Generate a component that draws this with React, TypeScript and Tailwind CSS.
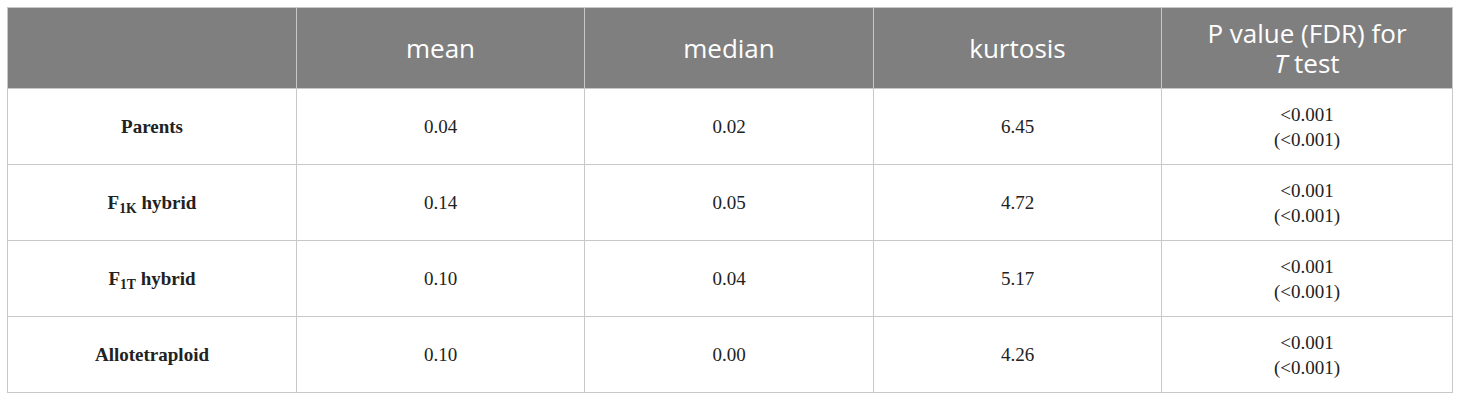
const rows = [
  { label: <>Parents</>, mean: "0.04", median: "0.02", kurtosis: "6.45" },
  {
    label: (
      <>
        F<sub className="text-[0.72em] align-[-0.05em]">1K</sub> hybrid
      </>
    ),
    mean: "0.14",
    median: "0.05",
    kurtosis: "4.72",
  },
  {
    label: (
      <>
        F<sub className="text-[0.72em] align-[-0.05em]">1T</sub> hybrid
      </>
    ),
    mean: "0.10",
    median: "0.04",
    kurtosis: "5.17",
  },
  { label: <>Allotetraploid</>, mean: "0.10", median: "0.00", kurtosis: "4.26" },
];

export default function App() {
  return (
    <div className="w-[1460px] h-[401px] bg-white p-[7px]">
      <table className="w-[1446px] table-fixed border-collapse border border-[#c8c8c8]">
        <colgroup>
          <col className="w-[289px]" />
          <col className="w-[288px]" />
          <col className="w-[289px]" />
          <col className="w-[288px]" />
          <col />
        </colgroup>
        <thead>
          <tr className="h-[81px] bg-[#7f7f7f] text-white font-['Open_Sans',sans-serif] text-[26px] leading-[30px]">
            <th className="border border-[#c8c8c8] font-normal" />
            <th className="border border-[#c8c8c8] font-normal">mean</th>
            <th className="border border-[#c8c8c8] font-normal">median</th>
            <th className="border border-[#c8c8c8] font-normal">kurtosis</th>
            <th className="border border-[#c8c8c8] font-normal px-2">
              P value (FDR) for
              <br />
              <i>T</i> test
            </th>
          </tr>
        </thead>
        <tbody className="font-['Liberation_Serif',serif] text-[19px] leading-[25px] text-[#222]">
          {rows.map((r, i) => (
            <tr key={i} className="h-[76px] text-center">
              <td className="border border-[#c8c8c8] font-bold">{r.label}</td>
              <td className="border border-[#c8c8c8]">{r.mean}</td>
              <td className="border border-[#c8c8c8]">{r.median}</td>
              <td className="border border-[#c8c8c8]">{r.kurtosis}</td>
              <td className="border border-[#c8c8c8]">
                &lt;0.001
                <br />
                (&lt;0.001)
              </td>
            </tr>
          ))}
        </tbody>
      </table>
    </div>
  );
}
